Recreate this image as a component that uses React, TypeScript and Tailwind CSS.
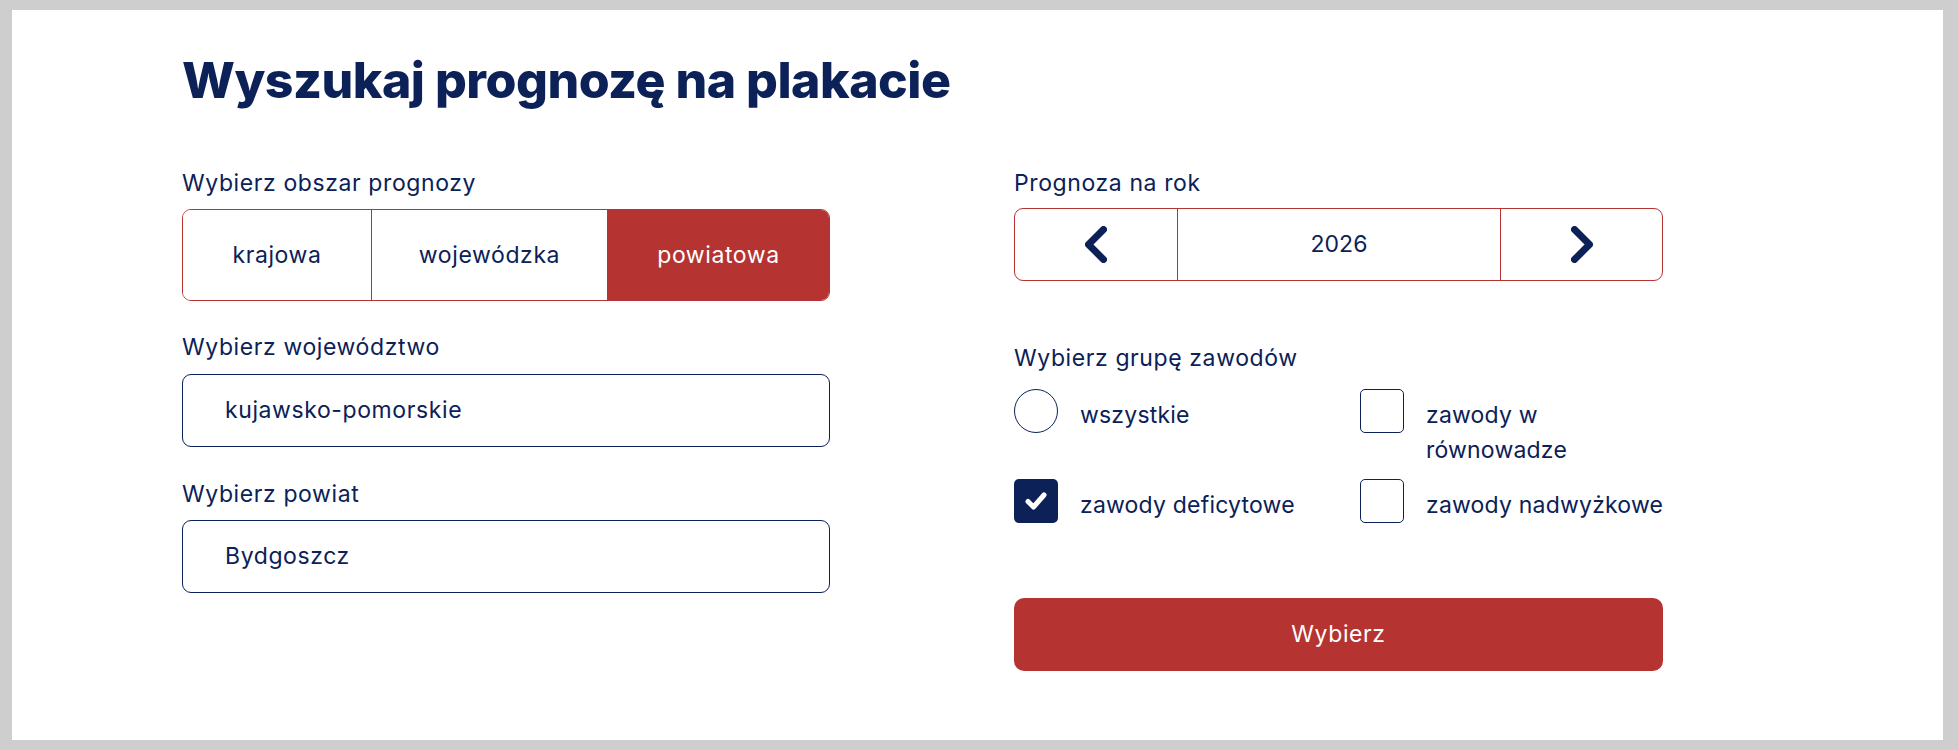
import React, { useState } from "react";

const NAVY = "text-[#0b2157]";
const BODY = "text-[23px] tracking-[0.6px]";

function Chevron({ dir }: { dir: "left" | "right" }) {
  const pts = dir === "left" ? "18.5,3.5 3.5,18.5 18.5,33.5" : "3.5,3.5 18.5,18.5 3.5,33.5";
  return (
    <svg width="22" height="37" viewBox="0 0 22 37" fill="none">
      <polyline points={pts} stroke="#0b2157" strokeWidth="7" strokeLinecap="round" strokeLinejoin="round" />
    </svg>
  );
}

function Check() {
  return (
    <svg width="22" height="18" viewBox="0 0 22 18" fill="none">
      <polyline points="3,9.5 8.5,15 19,3" stroke="#ffffff" strokeWidth="5" strokeLinecap="round" strokeLinejoin="round" />
    </svg>
  );
}

function Option({ label, kind, checked }: { label: React.ReactNode; kind: "radio" | "box"; checked?: boolean }) {
  return (
    <div className="flex items-start gap-[22px]">
      {kind === "radio" ? (
        <span className="w-[44px] h-[44px] shrink-0 rounded-full border-[1.5px] border-[#0b2157]" />
      ) : checked ? (
        <span className="w-[44px] h-[44px] shrink-0 rounded-[5px] bg-[#0b2157] flex items-center justify-center">
          <Check />
        </span>
      ) : (
        <span className="w-[44px] h-[44px] shrink-0 rounded-[5px] border-[1.5px] border-[#0b2157]" />
      )}
      <span className={`pt-[9px] whitespace-nowrap text-[23px] tracking-[0.2px] leading-[35px] ${NAVY}`}>{label}</span>
    </div>
  );
}

export default function App() {
  const [area, setArea] = useState("powiatowa");
  const segments = [
    { id: "krajowa", w: "w-[188px]" },
    { id: "wojewódzka", w: "w-[236px]" },
    { id: "powiatowa", w: "flex-1" },
  ];

  return (
    <div
      className="w-full h-[750px] bg-[#cecece] pt-[10px] pl-[12px] pr-[15px] pb-[10px]"
      style={{ fontFamily: "Inter, 'Noto Sans', sans-serif" }}
    >
      <div className="w-full h-full bg-white pl-[170px] pt-[40px]">
        <h1 className={`text-[50px] font-extrabold leading-[60px] tracking-[-0.5px] ${NAVY}`}>
          Wyszukaj prognozę na plakacie
        </h1>

        <div className="flex gap-[184px] mt-[58px]">
          {/* left column */}
          <div className="w-[648px] flex flex-col">
            <label className={`${BODY} leading-[30px] ${NAVY}`}>Wybierz obszar prognozy</label>
            <div className="mt-[11px] h-[92px] flex rounded-[9px] border border-[#b53330] overflow-hidden">
              {segments.map((s, i) => (
                <button
                  key={s.id}
                  onClick={() => setArea(s.id)}
                  className={`${s.w} h-full flex items-center justify-center ${BODY} ${
                    i > 0 ? "border-l border-[#b53330]" : ""
                  } ${area === s.id ? "bg-[#b53330] text-white" : `bg-white ${NAVY}`}`}
                >
                  {s.id}
                </button>
              ))}
            </div>

            <label className={`mt-[31px] ${BODY} leading-[30px] ${NAVY}`}>Wybierz województwo</label>
            <div className="mt-[12px] h-[73px] rounded-[9px] border-[1.5px] border-[#0b2157] flex items-center pl-[42px]">
              <span className={`${BODY} ${NAVY}`}>kujawsko-pomorskie</span>
            </div>

            <label className={`mt-[32px] ${BODY} leading-[30px] ${NAVY}`}>Wybierz powiat</label>
            <div className="mt-[11px] h-[73px] rounded-[9px] border-[1.5px] border-[#0b2157] flex items-center pl-[42px]">
              <span className={`${BODY} ${NAVY}`}>Bydgoszcz</span>
            </div>
          </div>

          {/* right column */}
          <div className="w-[649px] flex flex-col">
            <label className={`${BODY} leading-[30px] ${NAVY}`}>Prognoza na rok</label>
            <div className="mt-[10px] h-[73px] flex rounded-[9px] border border-[#b53330] overflow-hidden">
              <button className="w-[162px] h-full flex items-center justify-center">
                <Chevron dir="left" />
              </button>
              <div className={`flex-1 h-full flex items-center justify-center border-x border-[#b53330] text-[23px] ${NAVY}`}>
                2026
              </div>
              <button className="w-[161px] h-full flex items-center justify-center">
                <Chevron dir="right" />
              </button>
            </div>

            <label className={`mt-[62px] ${BODY} leading-[30px] ${NAVY}`}>Wybierz grupę zawodów</label>
            <div className="mt-[16px] grid grid-cols-[346px_303px] gap-y-[11px]">
              <Option kind="radio" label="wszystkie" />
              <Option kind="box" label={<>zawody w<br />równowadze</>} />
              <Option kind="box" checked label="zawody deficytowe" />
              <Option kind="box" label="zawody nadwyżkowe" />
            </div>

            <button className={`mt-[75px] h-[73px] w-full rounded-[10px] bg-[#b53330] text-white ${BODY}`}>
              Wybierz
            </button>
          </div>
        </div>
      </div>
    </div>
  );
}
